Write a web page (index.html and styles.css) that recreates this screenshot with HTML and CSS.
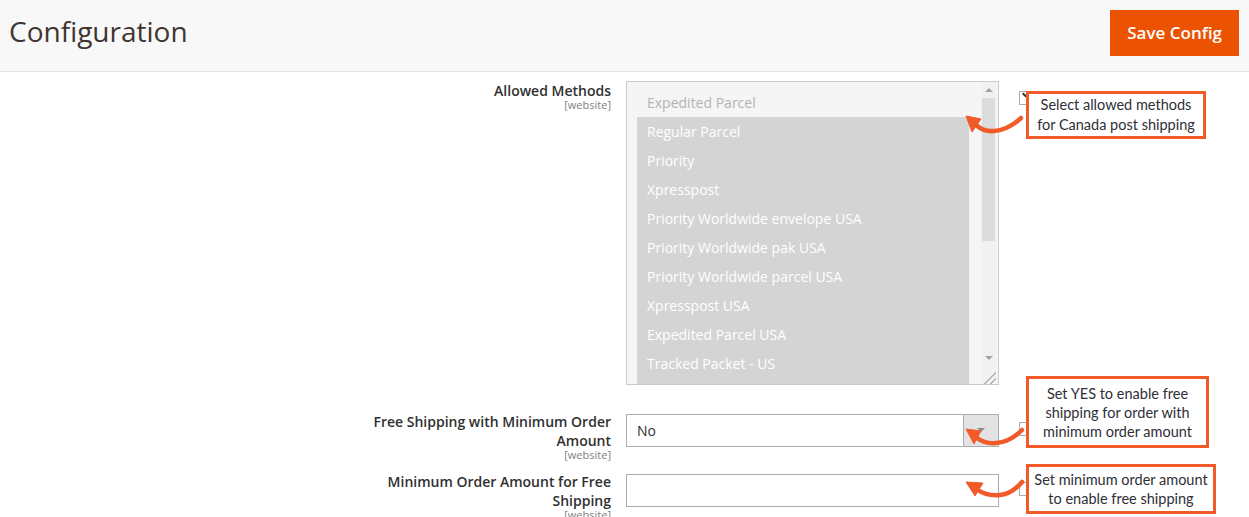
FILE: index.html
```html
<!DOCTYPE html>
<html lang="en">

<head>
    <meta charset="UTF-8">
    <title>Configuration</title>
    <link rel="stylesheet" href="styles.css">
</head>

<body>
    <header class="page-header">
        <h1 class="page-title">Configuration</h1>
        <button class="save-btn" type="button">Save Config</button>
    </header>

    <main class="config">
        <!-- Allowed methods -->
        <div class="field field-multi">
            <div class="label">
                <span class="label-text">Allowed Methods</span>
                <span class="scope">[website]</span>
            </div>
            <div class="control">
                <div class="multiselect">
                    <ul class="options">
                        <li class="option">Expedited Parcel</li>
                        <li class="option selected">Regular Parcel</li>
                        <li class="option selected">Priority</li>
                        <li class="option selected">Xpresspost</li>
                        <li class="option selected">Priority Worldwide envelope USA</li>
                        <li class="option selected">Priority Worldwide pak USA</li>
                        <li class="option selected">Priority Worldwide parcel USA</li>
                        <li class="option selected">Xpresspost USA</li>
                        <li class="option selected">Expedited Parcel USA</li>
                        <li class="option selected">Tracked Packet - US</li>
                        <li class="option selected">Small Packet USA Air</li>
                    </ul>
                    <div class="scrollbar">
                        <span class="scroll-btn scroll-up"></span>
                        <span class="scroll-thumb"></span>
                        <span class="scroll-track"></span>
                        <span class="scroll-btn scroll-down"></span>
                        <span class="resize-grip"></span>
                    </div>
                </div>
            </div>
            <span class="use-default checked"></span>

            <svg class="arrow arrow-methods" width="62" height="24" viewBox="0 0 62 24">
                <path d="M12 12 Q 20 19, 30 18 Q 44 17, 57 5" />
                <polygon points="2,3 17,6 8,19" />
            </svg>
            <div class="callout callout-methods">Select allowed methods<br>for Canada post shipping</div>
        </div>

        <!-- Free shipping flag -->
        <div class="field">
            <div class="label">
                <span class="label-text">Free Shipping with Minimum Order Amount</span>
                <span class="scope">[website]</span>
            </div>
            <div class="control">
                <div class="select">
                    <span class="select-value">No</span>
                    <span class="select-arrow"></span>
                </div>
            </div>
            <span class="use-default"></span>

            <svg class="arrow arrow-free" width="62" height="24" viewBox="0 0 62 24">
                <path d="M13 12 Q 21 18, 32 17 Q 46 16, 58 4" />
                <polygon points="2,3 17,5 10,18" />
            </svg>
            <div class="callout callout-free">Set YES to enable free<br>shipping for order with<br>minimum order amount</div>
        </div>

        <!-- Minimum amount -->
        <div class="field">
            <div class="label">
                <span class="label-text">Minimum Order Amount for Free Shipping</span>
                <span class="scope">[website]</span>
            </div>
            <div class="control">
                <input class="text-input" type="text">
            </div>
            <span class="use-default"></span>

            <svg class="arrow arrow-amount" width="62" height="24" viewBox="0 0 62 24">
                <path d="M14 11 Q 22 17, 36 16 Q 48 15, 58 3" />
                <polygon points="2,3 19,4 11,17" />
            </svg>
            <div class="callout callout-amount">Set minimum order amount<br>to enable free shipping</div>
        </div>
    </main>
</body>

</html>
```

FILE: styles.css
```css
:root {
    --accent: #eb5202;
    --note: #f15a29;
    --text: #303030;
}

* {
    margin: 0;
    padding: 0;
    box-sizing: border-box;
}

body {
    background: #ffffff;
    font-family: "Open Sans", "Liberation Sans", sans-serif;
    color: var(--text);
    overflow: hidden;
}

.page-header {
    display: flex;
    justify-content: space-between;
    align-items: flex-start;
    height: 72px;
    padding: 10px 10px 0 9px;
    background: #f8f8f8;
    border-bottom: 1px solid #e3e3e3;
}

.page-title {
    font-size: 28px;
    font-weight: 400;
    line-height: 42px;
    color: #41362f;
}

.save-btn {
    height: 46px;
    padding: 0 17px 2px;
    background-color: var(--accent);
    color: #ffffff;
    border: none;
    font-family: "Open Sans", sans-serif;
    font-size: 17px;
    font-weight: 600;
    cursor: pointer;
}

.config {
    padding-top: 9px;
}

.field {
    position: relative;
    display: grid;
    grid-template-columns: 611px 373px 14px;
    column-gap: 15px;
    margin-bottom: 13px;
}

.field-multi {
    margin-bottom: 27px;
}

.label {
    text-align: right;
}

.label-text {
    display: block;
    font-size: 14px;
    font-weight: 600;
    line-height: 19px;
    padding-left: 360px;
}

.scope {
    display: block;
    font-size: 11px;
    line-height: 9px;
    color: #808080;
}

.field .control {
    margin-top: 2px;
}

.field-multi .control {
    margin-top: 0;
}

/* multiselect */
.multiselect {
    display: flex;
    height: 304px;
    padding: 0 2px 0 10px;
    background: #f5f5f5;
    border: 1px solid #cbcbcb;
}

.options {
    flex: 1;
    list-style: none;
    padding-top: 6px;
    overflow: hidden;
}

.option {
    height: 29px;
    padding-left: 10px;
    font-size: 14px;
    line-height: 29px;
    color: #b3b3b3;
    white-space: nowrap;
}

.option.selected {
    background: #d4d4d4;
    color: #ffffff;
}

.scrollbar {
    display: flex;
    flex-direction: column;
    width: 15px;
    margin-left: 12px;
    background: #f1f1f1;
}

.scroll-btn {
    position: relative;
    height: 16px;
}

.scroll-btn::after {
    content: "";
    position: absolute;
    left: 4px;
    top: 6px;
    border-left: 4px solid transparent;
    border-right: 4px solid transparent;
}

.scroll-up::after {
    border-bottom: 4px solid #a3a3a3;
}

.scroll-down::after {
    border-top: 4px solid #a3a3a3;
}

.scroll-thumb {
    height: 143px;
    margin: 0 1px;
    background: #dcdcdc;
}

.scroll-track {
    flex: 1;
}

.resize-grip {
    height: 18px;
    background:
        linear-gradient(135deg, transparent 62%, #b5b5b5 62%, #b5b5b5 68%, transparent 68%, transparent 80%, #b5b5b5 80%, #b5b5b5 86%, transparent 86%);
}

/* single select + input */
.select {
    display: flex;
    height: 33px;
    border: 1px solid #adadad;
    background: #ffffff;
}

.select-value {
    flex: 1;
    padding-left: 10px;
    font-size: 14px;
    line-height: 31px;
}

.select-arrow {
    position: relative;
    width: 35px;
    background: #e3e3e3;
    border-left: 1px solid #adadad;
}

.select-arrow::after {
    content: "";
    position: absolute;
    left: 13px;
    top: 13px;
    border-left: 4px solid transparent;
    border-right: 4px solid transparent;
    border-top: 4px solid #8a8a8a;
}

.text-input {
    display: block;
    width: 100%;
    height: 33px;
    border: 1px solid #adadad;
    background: #ffffff;
}

.use-default {
    width: 14px;
    height: 14px;
    margin: 10px 0 0 5px;
    border: 1px solid #adadad;
    background: #ffffff;
    position: relative;
}

.use-default.checked::after {
    content: "";
    position: absolute;
    left: 2px;
    top: 2px;
    width: 5px;
    height: 2px;
    background: #303030;
    transform: rotate(45deg);
}

/* annotations */
.arrow {
    position: absolute;
    left: 964px;
    z-index: 2;
    overflow: visible;
}

.arrow path {
    fill: none;
    stroke: var(--note);
    stroke-width: 4.5;
    stroke-linecap: round;
}

.arrow polygon {
    fill: var(--note);
    stroke: var(--note);
    stroke-width: 1;
    stroke-linejoin: round;
}

.arrow-methods {
    top: 32px;
}

.arrow-free {
    top: 14px;
}

.arrow-amount {
    top: 7px;
}

.callout {
    position: absolute;
    left: 1026px;
    z-index: 3;
    display: flex;
    align-items: center;
    justify-content: center;
    border: 3px solid var(--note);
    background: #ffffff;
    font-family: Lato, "Open Sans", sans-serif;
    font-size: 14.5px;
    line-height: 19px;
    color: #2f2f38;
    text-align: center;
}

.callout-methods {
    top: 10px;
    width: 180px;
    height: 48px;
    line-height: 20px;
}

.callout-free {
    top: -36px;
    width: 183px;
    height: 72px;
}

.callout-amount {
    top: -8px;
    width: 190px;
    height: 50px;
}
```
